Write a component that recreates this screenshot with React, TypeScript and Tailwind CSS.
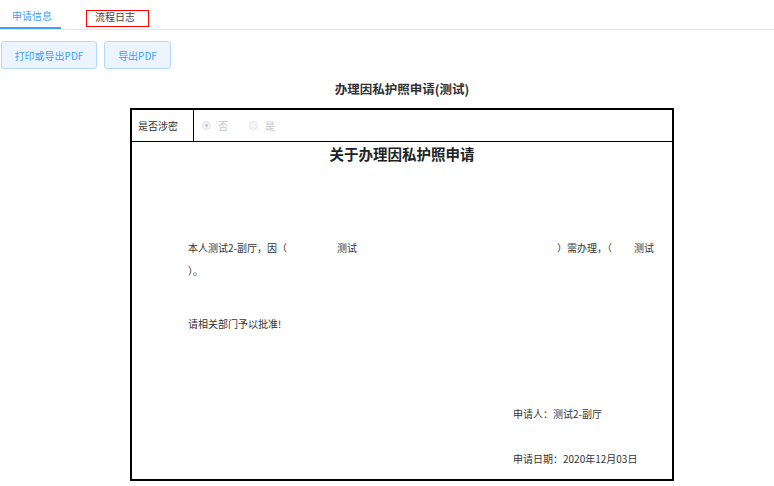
import React from "react"

const font = { fontFamily: '"Noto Sans CJK SC", "Noto Sans", sans-serif' }

function Radio({ label, checked }: { label: string; checked?: boolean }) {
  return (
    <span className="flex items-center">
      <span className="flex h-[9px] w-[9px] items-center justify-center rounded-full border border-[#dfe2e8] bg-[#f3f5f8]">
        {checked && <span className="h-[3px] w-[3px] rounded-full bg-[#c0c4cc]" />}
      </span>
      <span className="ml-[7px] text-[10px] leading-[14px] text-[#c0c4cc]">{label}</span>
    </span>
  )
}

export default function App() {
  return (
    <div className="min-h-screen w-[774px] bg-white text-[#333]" style={font}>
      <div className="flex h-[30px] border-b border-[#e4e7ed]">
        <div className="w-[61px] border-b-2 border-[#409eff] pl-[12px] pt-[9px] text-[10px] leading-[14px] text-[#409eff]">
          申请信息
        </div>
        <div className="ml-[25px] mt-[10px] h-[17px] w-[63px] border border-[#f00] pl-[8px] text-[10px] leading-[12px] text-[#444]">
          流程日志
        </div>
      </div>

      <div className="ml-[1px] mt-[11px] flex gap-[7px]">
        <button className="flex h-[28px] w-[96px] items-center justify-center rounded-[3px] border border-[#b3d8ff] bg-[#ecf5ff] text-[10px] text-[#409eff]">
          打印或导出PDF
        </button>
        <button className="flex h-[28px] w-[67px] items-center justify-center rounded-[3px] border border-[#b3d8ff] bg-[#ecf5ff] text-[10px] text-[#409eff]">
          导出PDF
        </button>
      </div>

      <div className="ml-[130px] w-[544px]">
        <h1 className="mt-[12px] text-center text-[12.5px] font-bold leading-[16px] text-[#303133]">
          办理因私护照申请(测试)
        </h1>

        <div className="mt-[11px] h-[373px] w-[544px] border-2 border-black">
          <div className="flex h-[32px] border-b border-black">
            <div className="flex w-[62px] items-center border-r border-black pl-[6px] text-[10px] text-[#333]">
              是否涉密
            </div>
            <div className="flex items-center gap-[21px] pl-[8px]">
              <Radio label="否" checked />
              <Radio label="是" />
            </div>
          </div>

          <h2 className="pt-[3px] text-center text-[14.5px] font-bold leading-[18px] text-[#222]">
            关于办理因私护照申请
          </h2>

          <div className="pl-[56px] text-[10px] leading-[23px] text-[#333]">
            <p className="mt-[73px] whitespace-nowrap">
              <span className="inline-block w-[149px]">本人测试2-副厅，因（</span>
              <span className="inline-block w-[220px]">测试</span>
              <span className="inline-block w-[77px]">）需办理，（</span>
              <span className="inline-block">测试</span>
              <br />
              ）。
            </p>
            <p className="mt-[30px]">请相关部门予以批准!</p>
            <p className="ml-[325px] mt-[67px]">申请人：测试2-副厅</p>
            <p className="ml-[325px] mt-[22px]">申请日期：2020年12月03日</p>
          </div>
        </div>
      </div>
    </div>
  )
}
